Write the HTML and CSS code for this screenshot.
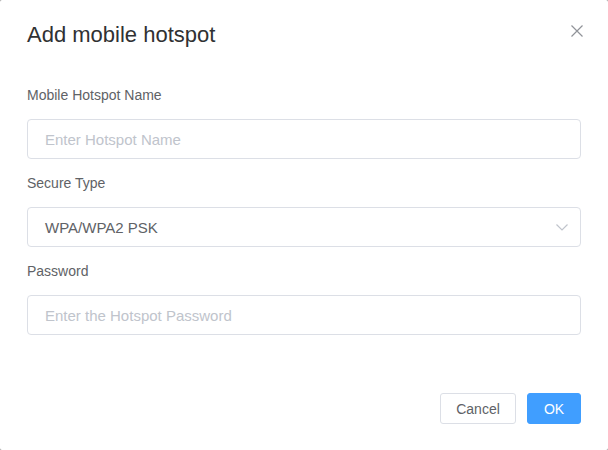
FILE: index.html
```html
<!DOCTYPE html>
<html>
<head>
<meta charset="utf-8">
<link rel="stylesheet" href="styles.css">
</head>
<body>
<div class="dialog">
  <div class="header">
    <span class="title">Add mobile hotspot</span>
    <svg class="close" width="12" height="12" viewBox="0 0 12 12"><path d="M0.5 0.5 L11.5 11.5 M11.5 0.5 L0.5 11.5" stroke="#909399" stroke-width="1.2" fill="none"/></svg>
  </div>
  <div class="form">
    <div class="field">
      <div class="label">Mobile Hotspot Name</div>
      <div class="input placeholder">Enter Hotspot Name</div>
    </div>
    <div class="field">
      <div class="label">Secure Type</div>
      <div class="input select"><span>WPA/WPA2 PSK</span>
        <svg class="chev" width="12" height="7" viewBox="0 0 12 7"><path d="M0.5 0.5 L6 6 L11.5 0.5" stroke="#c0c4cc" stroke-width="1.2" fill="none"/></svg>
      </div>
    </div>
    <div class="field">
      <div class="label">Password</div>
      <div class="input placeholder">Enter the Hotspot Password</div>
    </div>
  </div>
  <div class="footer">
    <div class="btn cancel">Cancel</div>
    <div class="btn ok">OK</div>
  </div>
</div>
</body>
</html>
```
FILE: styles.css
```css
html { background: #9a9a9a; }
body {
  margin: 0;
  font-family: "Liberation Sans", Arial, sans-serif;
}
.dialog {
  background: #fff;
  width: 608px;
  height: 450px;
  box-sizing: border-box;
  border-radius: 2px;
  padding: 20px 27px 0 27px;
  display: flex;
  flex-direction: column;
}
.header {
  height: 30px;
  display: flex;
  align-items: center;
  justify-content: space-between;
}
.title {
  font-size: 22px;
  color: #303133;
  line-height: 30px;
}
.close { margin-right: -2px; margin-top: -8px; }
.form {
  margin-top: 35px;
  display: flex;
  flex-direction: column;
  gap: 14px;
}
.field { display: flex; flex-direction: column; gap: 14px; }
.label {
  font-size: 14px;
  line-height: 20px;
  color: #606266;
  height: 20px;
}
.input {
  height: 40px;
  box-sizing: border-box;
  border: 1px solid #dcdfe6;
  border-radius: 4px;
  padding: 0 12px 0 17px;
  display: flex;
  align-items: center;
  font-size: 15px;
  color: #606266;
}
.placeholder { color: #c0c4cc; }
.select { justify-content: space-between; }
.chev { margin-top: 1px; }
.footer {
  margin-top: auto;
  margin-bottom: 26px;
  display: flex;
  justify-content: flex-end;
  gap: 11px;
}
.btn {
  height: 31px;
  box-sizing: border-box;
  border-radius: 3px;
  display: flex;
  align-items: center;
  justify-content: center;
  font-size: 14px;
}
.cancel {
  width: 76px;
  border: 1px solid #dcdfe6;
  color: #606266;
  background: #fff;
}
.ok {
  width: 54px;
  background: #409eff;
  border: 1px solid #409eff;
  color: #fff;
}
```
